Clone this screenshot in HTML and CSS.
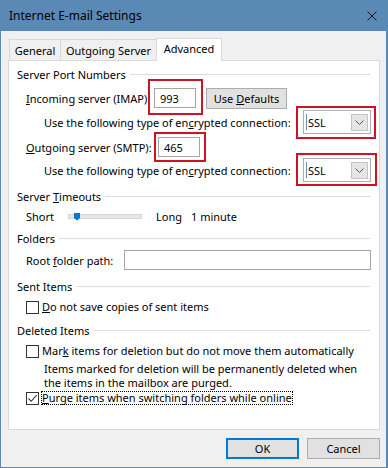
FILE: index.html
```html
<!DOCTYPE html>
<html>
<head>
<meta charset="utf-8">
<title>Internet E-mail Settings</title>
<link rel="stylesheet" href="styles.css">
</head>
<body>
<div class="window">
  <div class="titlebar">
    <span class="title">Internet E-mail Settings</span>
    <svg class="close" viewBox="0 0 10 10" width="10" height="10"><path d="M0.5 0.5 L9.5 9.5 M9.5 0.5 L0.5 9.5" stroke="#111" stroke-width="1" fill="none"/></svg>
  </div>
  <div class="body">
    <div class="tabs">
      <div class="tab tab-general"><span>General</span></div>
      <div class="tab tab-outgoing"><span>Outgoing Server</span></div>
      <div class="tab tab-advanced active"><span>Advanced</span></div>
    </div>
    <div class="panel">
      <div class="section"><span>Server Port Numbers</span></div>
      <div class="row row-in">
        <span class="lbl lbl-in"><u>I</u>ncoming server (IMAP):</span>
        <span class="hl hl-in"><span class="textbox port"><span>993</span></span></span>
        <button class="btn btn-defaults"><span>Use <u>D</u>efaults</span></button>
      </div>
      <div class="row row-use">
        <span class="use-lbl">Use the following type of en<u>c</u>rypted connection:</span>
        <span class="hl hl-combo1"><span class="combo"><span class="combo-text"><span>SSL</span></span><span class="combo-arrow"><svg viewBox="0 0 9 5" width="9" height="5"><path d="M0.5 0.5 L4.5 4.5 L8.5 0.5" stroke="#555" stroke-width="1" fill="none"/></svg></span></span></span>
      </div>
      <div class="row row-out">
        <span class="lbl lbl-out"><u>O</u>utgoing server (SMTP):</span>
        <span class="hl hl-out"><span class="textbox port"><span>465</span></span></span>
      </div>
      <div class="row row-use row-use2">
        <span class="use-lbl">Use the following type of en<u>c</u>rypted connection:</span>
        <span class="hl hl-combo2"><span class="combo"><span class="combo-text"><span>SSL</span></span><span class="combo-arrow"><svg viewBox="0 0 9 5" width="9" height="5"><path d="M0.5 0.5 L4.5 4.5 L8.5 0.5" stroke="#555" stroke-width="1" fill="none"/></svg></span></span></span>
      </div>
      <div class="section sect-timeouts"><span>Server <u>T</u>imeouts</span></div>
      <div class="row row-slider">
        <span class="short-lbl">Short</span>
        <span class="track"><span class="thumb"></span></span>
        <span class="long-lbl">Long</span>
        <span class="minute">1 minute</span>
      </div>
      <div class="section sect-folders"><span>Folders</span></div>
      <div class="row row-root">
        <span class="root-lbl">Root <u>f</u>older path:</span>
        <span class="textbox root-box"></span>
      </div>
      <div class="section sect-sent"><span>Sent Items</span></div>
      <div class="row row-cb row-cb1">
        <span class="checkbox"></span>
        <span class="cb-lbl"><u>D</u>o not save copies of sent items</span>
      </div>
      <div class="section sect-deleted"><span>Deleted Items</span></div>
      <div class="row row-cb row-cb2">
        <span class="checkbox"></span>
        <span class="cb-lbl">Mar<u>k</u> items for deletion but do not move them automatically</span>
      </div>
      <div class="desc">Items marked for deletion will be permanently deleted when<br>the items in the mailbox are purged.</div>
      <div class="row row-cb row-cb3">
        <span class="checkbox checked"><svg viewBox="0 0 11 11" width="11" height="11"><path d="M1.5 5.5 L4.2 8.3 L9.6 2.2" stroke="#333" stroke-width="1.1" fill="none"/></svg></span>
        <span class="cb-lbl focus"><span><u>P</u>urge items when switching folders while online</span></span>
      </div>
    </div>
    <div class="footer">
      <button class="btn btn-ok"><span>OK</span></button>
      <button class="btn btn-cancel"><span>Cancel</span></button>
    </div>
  </div>
</div>
</body>
</html>
```
FILE: styles.css
```css
* { box-sizing: border-box; }
html, body { margin: 0; padding: 0; }
body {
  width: 388px;
  height: 468px;
  overflow: hidden;
  font-family: "Noto Sans", "Open Sans", sans-serif;
  font-size: 11px;
  color: #000;
  background: #f0f0f0;
}
.window {
  width: 388px;
  height: 468px;
  display: flex;
  flex-direction: column;
}
.titlebar {
  flex: none;
  height: 31px;
  background: #5b89b6;
  display: flex;
  align-items: center;
  padding-left: 9px;
}
.title { flex: 1; font-size: 12px; color: #000; }
.close { margin-right: 11px; display: block; }
.body {
  flex: 1;
  background: #f0f0f0;
  border: 1px solid #5b89b6;
  border-top: none;
  border-right-width: 2px;
  padding: 7px 6px 0 7px;
  display: flex;
  flex-direction: column;
}
.tabs {
  display: flex;
  align-items: flex-end;
  height: 22px;
  padding-left: 1px;
  position: relative;
  z-index: 1;
  flex: none;
}
.tab {
  height: 21px;
  border: 1px solid #d9d9d9;
  border-bottom: none;
  background: #f0f0f0;
  display: flex;
  align-items: center;
  justify-content: center;
  white-space: nowrap;
}
.tab + .tab { margin-left: -1px; }
.tab-general { width: 52px; }
.tab-outgoing { width: 97px; }
.tab-advanced { width: 66px; }
.tab.active {
  height: 23px;
  margin-bottom: -1px;
  background: #fff;
  padding-bottom: 3px;
}
.panel {
  flex: none;
  width: 372px;
  height: 370px;
  background: #fff;
  border: 1px solid #d9d9d9;
  padding: 5px 8px 0 8px;
  display: flex;
  flex-direction: column;
}
.section {
  display: flex;
  align-items: center;
  height: 16px;
  white-space: nowrap;
}
.section::after {
  content: "";
  flex: 1;
  border-top: 1px solid #dcdcdc;
  margin-left: 4px;
  margin-right: 1px;
}
.row {
  display: flex;
  align-items: center;
  padding-left: 9px;
  white-space: nowrap;
}
.row-in { margin-top: 4px; height: 24px; }
.row-use { height: 24px; padding-left: 27px; }
.row-out { margin-top: 2px; height: 22px; }
.sect-timeouts { margin-top: 6px; }
.row-slider { margin-top: 2px; height: 20px; }
.sect-folders { margin-top: 4px; }
.row-root { margin-top: 3px; height: 22px; }
.sect-sent { margin-top: 7px; }
.row-cb { height: 18px; }
.row-cb1 { margin-top: 4px; }
.sect-deleted { margin-top: 6px; }
.row-cb2 { margin-top: 4px; }

.lbl-in { width: 128px; }
.lbl-out { width: 132px; }
.textbox {
  display: flex;
  align-items: center;
  height: 20px;
  border: 1px solid #a5a5a5;
  background: #fff;
  padding-left: 5px;
}
.port { width: 42px; }
.hl { position: relative; display: inline-flex; }
.hl::after {
  content: "";
  position: absolute;
  border: 2px solid #cc1424;
  pointer-events: none;
}
.hl-in::after { left: -6px; right: -7px; top: -9px; bottom: -7px; }
.hl-out::after { left: -4px; right: -6px; top: -5px; bottom: -5px; }
.hl-combo1::after { left: -7px; right: -5px; top: -4px; bottom: -5px; }
.hl-combo2::after { left: -7px; right: -6px; top: -5px; bottom: -4px; }
.hl-combo1, .hl-combo2 { margin-left: auto; }

.btn {
  font-family: inherit;
  font-size: 11px;
  color: #000;
  background: #e1e1e1;
  border: 1px solid #adadad;
  padding: 0;
  margin: 0;
  display: flex;
  align-items: center;
  justify-content: center;
}
.btn-defaults { width: 81px; height: 21px; margin-left: 10px; }

.use-lbl { flex: none; }
.combo {
  width: 68px;
  height: 24px;
  border: 1px solid #acacac;
  background: #fff;
  display: flex;
  align-items: center;
  padding: 2px;
}
.combo-text {
  flex: 1;
  border-left: 1px solid #6f8fb8;
  padding-left: 1px;
  height: 16px;
  display: flex;
  align-items: center;
}
.combo-arrow {
  width: 17px;
  height: 17px;
  background: #e5e5e5;
  border: 1px solid #c4c4c4;
  display: flex;
  align-items: center;
  justify-content: center;
}
.combo-arrow svg { display: block; }

.short-lbl { width: 42px; }
.track {
  position: relative;
  width: 74px;
  height: 5px;
  background: #e7e7e7;
  border: 1px solid #d6d6d6;
}
.thumb {
  position: absolute;
  left: 5px;
  top: -2px;
  width: 6px;
  height: 8px;
  background: #0078d7;
  clip-path: polygon(0 0, 100% 0, 100% 70%, 50% 100%, 0 70%);
}
.long-lbl { width: 35px; margin-left: 14px; }

.root-lbl { width: 98px; }
.root-box { flex: 1; }

.checkbox {
  width: 13px;
  height: 13px;
  border: 1px solid #333;
  background: #fff;
  margin-right: 3px;
  display: flex;
  align-items: center;
  justify-content: center;
  flex: none;
}
.checkbox svg { display: block; }
.cb-lbl { line-height: 14px; }
.focus {
  border: 1px dotted #000;
  margin-left: -1px;
  height: 14px;
  display: flex;
  align-items: center;
}
.desc {
  margin-top: 2px;
  padding-left: 27px;
  line-height: 14px;
  height: 27px;
  white-space: nowrap;
}
.footer {
  display: flex;
  justify-content: flex-end;
  gap: 8px;
  margin-top: 8px;
}
.btn-ok, .btn-cancel { width: 73px; height: 21px; }
.btn-ok { border: 2px solid #0078d7; }
```
